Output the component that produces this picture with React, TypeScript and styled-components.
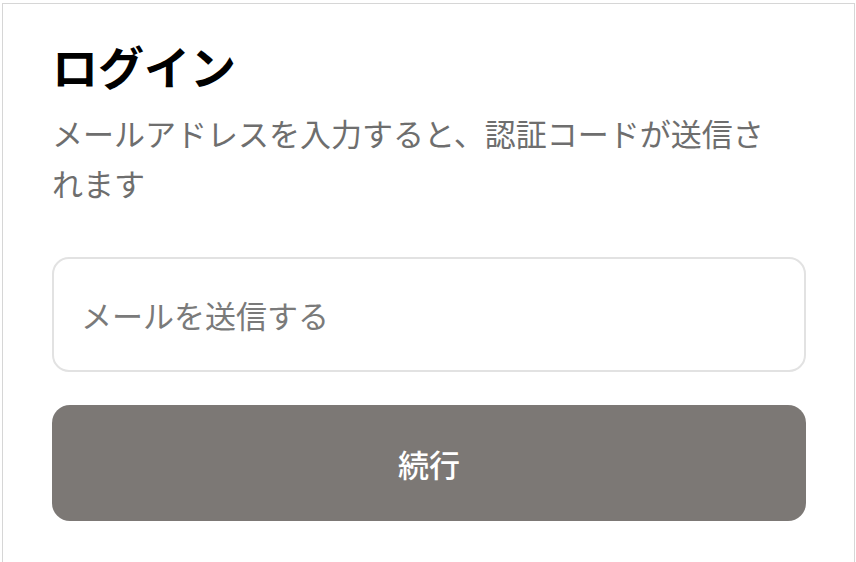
import { createGlobalStyle } from 'styled-components';
import styled from 'styled-components';

const GlobalStyle = createGlobalStyle`
	html, body {
		margin: 0;
		padding: 0;
		background: #ffffff;
		overflow: hidden;
	}
	body {
		font-family: "Noto Sans CJK JP", "Noto Sans", sans-serif;
	}
`;

const Page = styled.div`
	width: 856px;
	height: 562px;
	padding: 3px 1px 0 2px;
	box-sizing: border-box;
	overflow: hidden;
`;

const Card = styled.div`
	border: 1px solid #d6d6d6;
	border-bottom: none;
	height: 600px;
	padding: 29px 48px 0 49px;
	display: flex;
	flex-direction: column;
`;

const Title = styled.h1`
	margin: 0;
	font-size: 46px;
	line-height: 64px;
	font-weight: 700;
	color: #000000;
`;

const Description = styled.p`
	margin: 11px 0 0;
	max-width: 740px;
	font-size: 31px;
	line-height: 50px;
	color: #6e6e6e;
`;

const Input = styled.input`
	margin-top: 49px;
	height: 115px;
	box-sizing: border-box;
	border: 2px solid #e2e2e2;
	border-radius: 17px;
	padding: 0 27px;
	font-family: inherit;
	font-size: 31px;
	color: #333333;
	outline: none;

	&::placeholder {
		color: #7a7a7a;
	}
`;

const SubmitButton = styled.button`
	margin-top: 33px;
	height: 116px;
	border: none;
	border-radius: 18px;
	background: #7c7875;
	color: #ffffff;
	font-family: inherit;
	font-size: 31px;
	font-weight: 500;
	cursor: pointer;
`;

const Note = styled.p`
	margin: 36px 0 0;
	font-size: 26px;
	line-height: 40px;
	color: #8a8a8a;
	text-align: center;
`;

const App = () => {
	return (
		<>
			<GlobalStyle />
			<Page>
				<Card>
					<Title>ログイン</Title>
					<Description>メールアドレスを入力すると、認証コードが送信されます</Description>
					<Input type='email' placeholder='メールを送信する' />
					<SubmitButton type='button'>続行</SubmitButton>
					<Note>続行すると、プライバシーポリシーに同意したことになります</Note>
				</Card>
			</Page>
		</>
	);
};

export default App;
